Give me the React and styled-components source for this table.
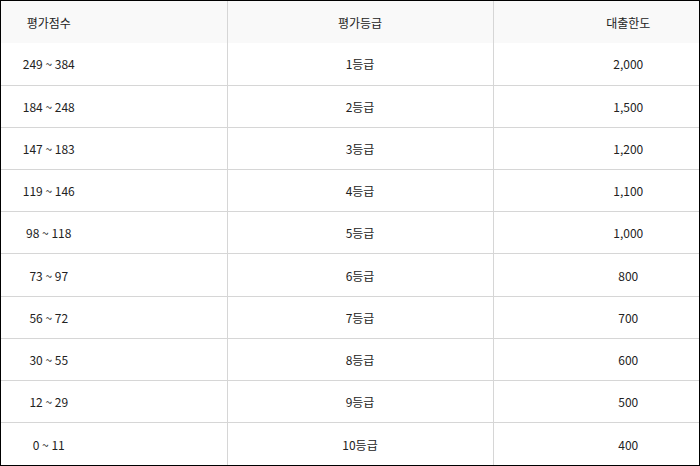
import React from "react";
import styled, { createGlobalStyle } from "styled-components";

const GlobalStyle = createGlobalStyle`
  html, body {
    margin: 0;
    padding: 0;
    background: #fff;
  }
  * {
    box-sizing: border-box;
  }
`;

const Frame = styled.div`
  width: 700px;
  height: 466px;
  border: 1px solid #000;
  background: #fff;
`;

const Table = styled.table`
  width: 698px;
  height: 464px;
  border-collapse: collapse;
  table-layout: fixed;
  font-family: "Noto Sans CJK KR", "Noto Sans", sans-serif;
  font-size: 12px;
  color: #222;
`;

const HeadRow = styled.tr`
  height: 42px;
  background: #f9f9f9;
`;

const Row = styled.tr`
  height: 42.2px;
`;

const Cell = styled.td`
  text-align: center;
  vertical-align: middle;
  padding: 0 ${(p) => p.$pr || 0}px 0 ${(p) => p.$pl || 0}px;
  border-bottom: 1px solid #d6d6d6;
  border-right: ${(p) => (p.$last ? "none" : "1px solid #d6d6d6")};
  font-weight: 400;
  white-space: nowrap;
  tr:last-child > & {
    border-bottom: none;
  }
`;

const HeadCell = styled(Cell).attrs({ as: "th" })``;

const rows = [
  ["249 ~ 384", "1등급", "2,000"],
  ["184 ~ 248", "2등급", "1,500"],
  ["147 ~ 183", "3등급", "1,200"],
  ["119 ~ 146", "4등급", "1,100"],
  ["98 ~ 118", "5등급", "1,000"],
  ["73 ~ 97", "6등급", "800"],
  ["56 ~ 72", "7등급", "700"],
  ["30 ~ 55", "8등급", "600"],
  ["12 ~ 29", "9등급", "500"],
  ["0 ~ 11", "10등급", "400"],
];

export default function App() {
  return (
    <>
      <GlobalStyle />
      <Frame>
        <Table>
          <colgroup>
            <col style={{ width: 226 }} />
            <col style={{ width: 266 }} />
            <col style={{ width: 206 }} />
          </colgroup>
          <thead>
            <HeadRow>
              <HeadCell $pr={130}>평가점수</HeadCell>
              <HeadCell>평가등급</HeadCell>
              <HeadCell $pl={64} $last>
                대출한도
              </HeadCell>
            </HeadRow>
          </thead>
          <tbody>
            {rows.map(([score, grade, limit]) => (
              <Row key={score}>
                <Cell $pr={130}>{score}</Cell>
                <Cell>{grade}</Cell>
                <Cell $pl={64} $last>
                  {limit}
                </Cell>
              </Row>
            ))}
          </tbody>
        </Table>
      </Frame>
    </>
  );
}
